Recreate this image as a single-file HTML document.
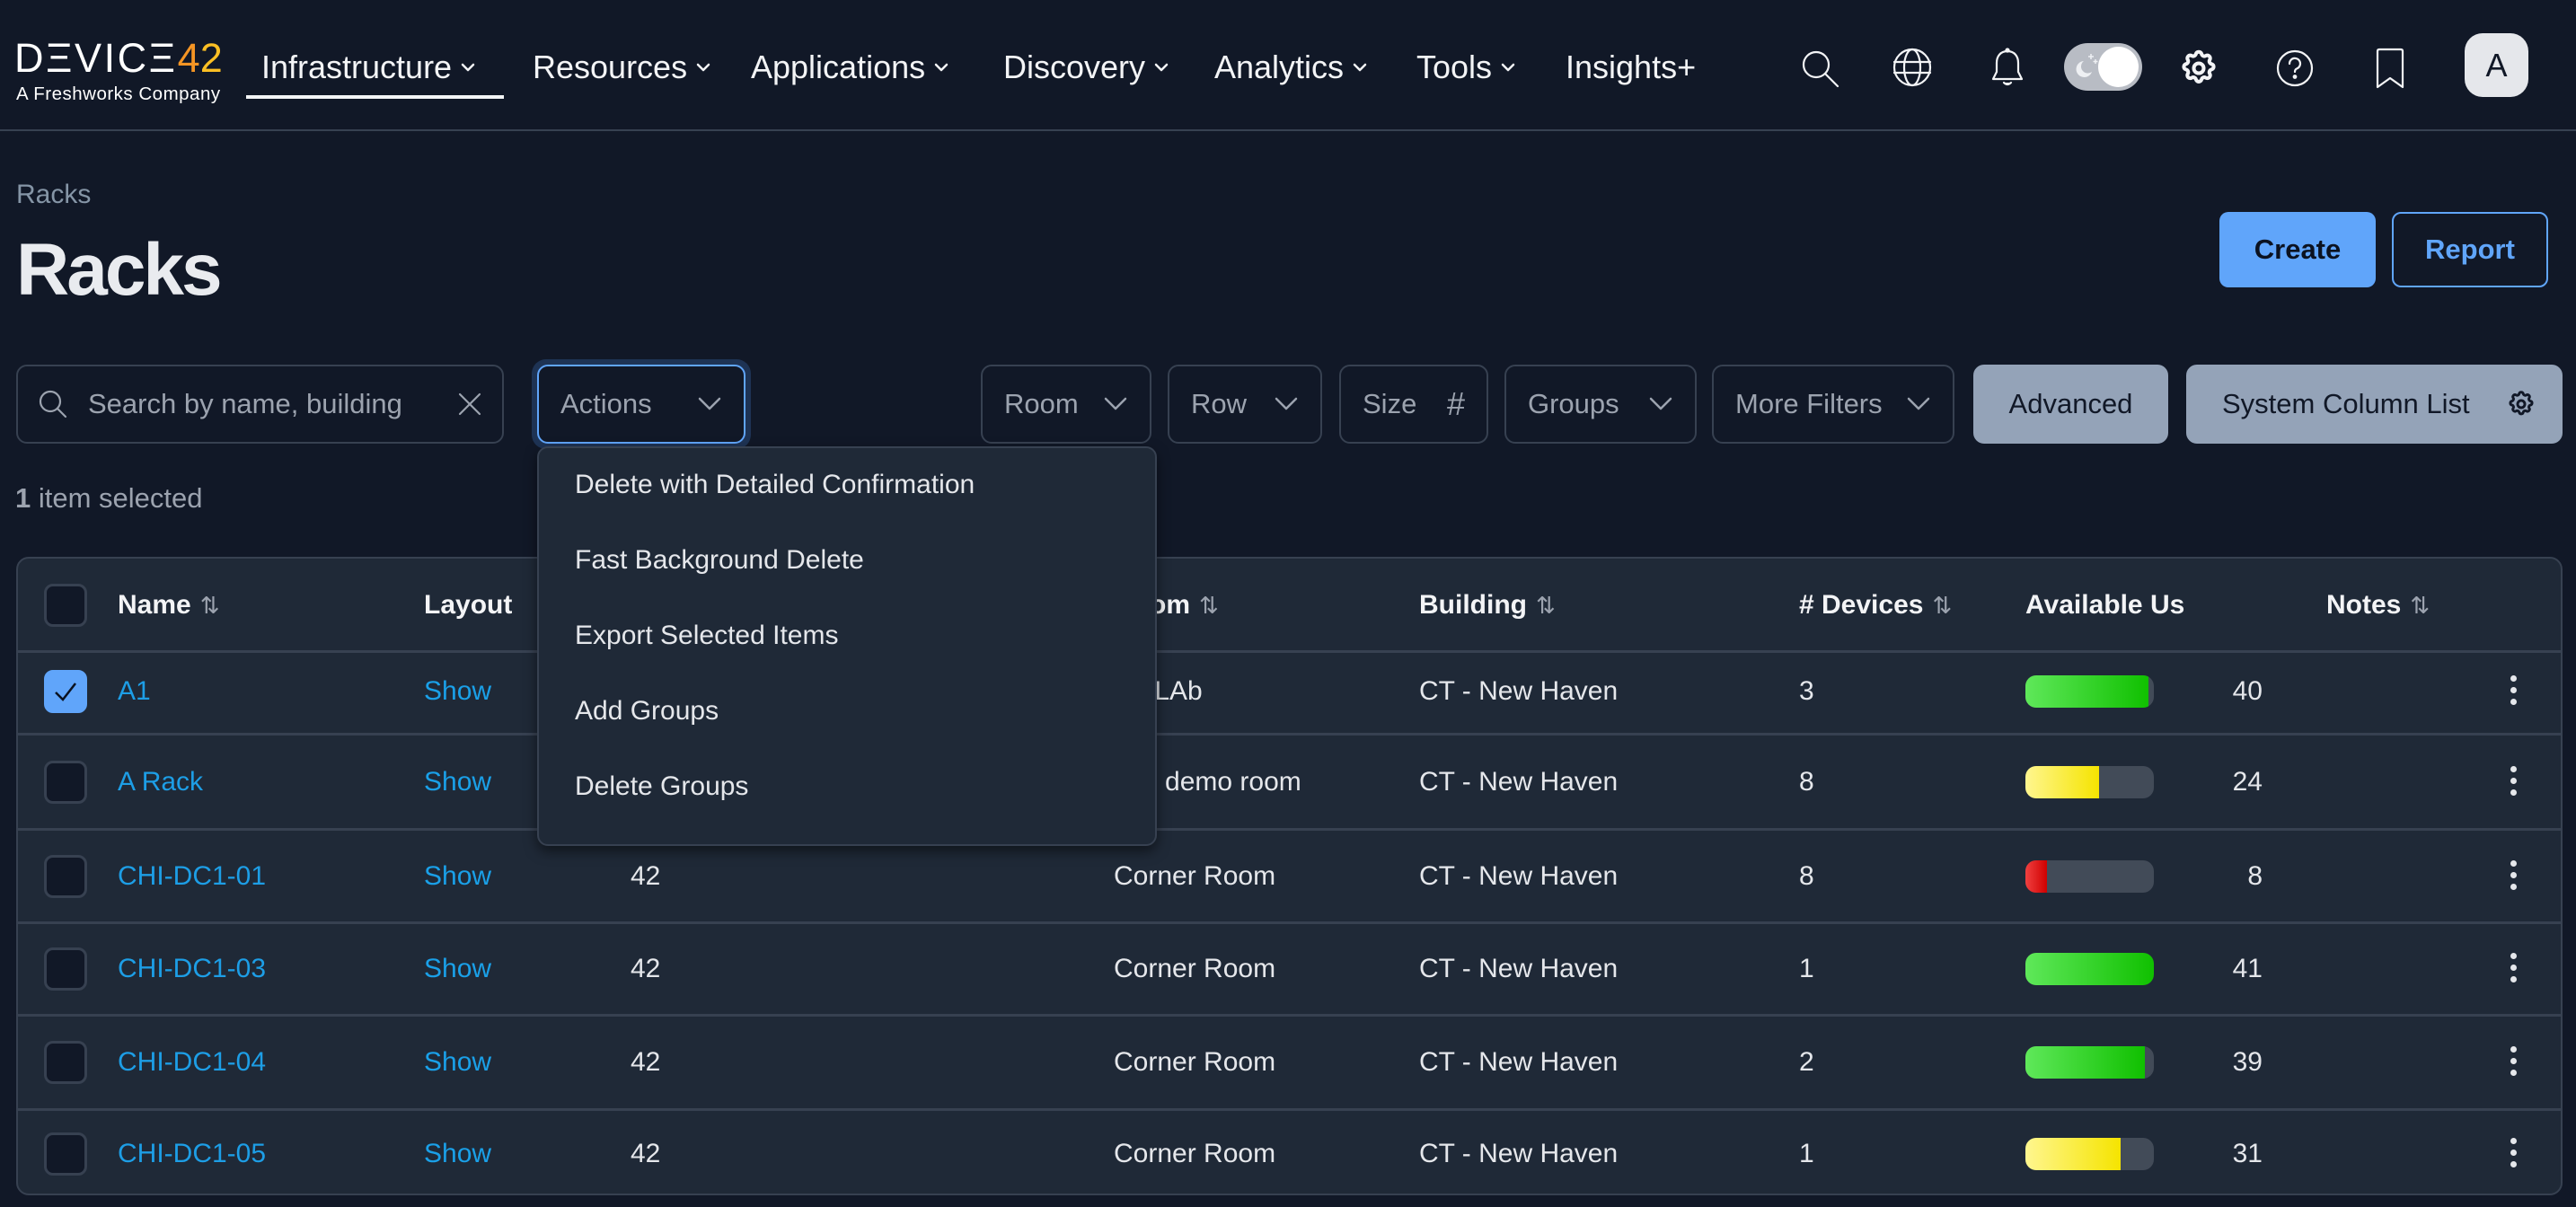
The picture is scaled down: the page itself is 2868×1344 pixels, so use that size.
<!DOCTYPE html>
<html><head><meta charset="utf-8">
<style>
*{box-sizing:border-box;margin:0;padding:0}
body{width:2868px;height:1344px;background:#111827;font-family:"Liberation Sans",sans-serif;color:#e5e7eb;position:relative;overflow:hidden}
.a{position:absolute}
.nav{font-size:36px;color:#f3f4f6;top:54px;display:flex;align-items:center;gap:10px;white-space:nowrap}
.ic{position:absolute;fill:none;stroke:#f3f4f6;stroke-width:2.2;stroke-linecap:round;stroke-linejoin:round}
.f{position:absolute;top:406px;height:88px;border:2px solid #374151;border-radius:12px;display:flex;align-items:center;padding:0 24px;font-size:31px;color:#9ca3af;justify-content:space-between}
.chev{width:28px;height:18px;fill:none;stroke:#9ca3af;stroke-width:2.5;stroke-linecap:round;stroke-linejoin:round}
.row{position:absolute;left:20px;width:2831px;border-top:3px solid #374151}
.c{position:absolute;top:0;height:100%;display:flex;align-items:center;font-size:30px;color:#e5e7eb;white-space:nowrap}
.lk{color:#1d9ee6}
.sh{color:#1aa0e8}
.cb{position:absolute;left:29px;top:50%;margin-top:-24px;width:48px;height:48px;border:3px solid #374151;border-radius:10px;background:#111827}
.hd{font-weight:bold;font-size:30px;color:#f3f4f6}
.srt{font-weight:normal;color:#9ca3af;margin-left:10px;font-size:26px}
.bar{position:absolute;left:2235px;top:50%;margin-top:-18px;width:143px;height:36px;border-radius:12px;background:#424b58;overflow:hidden}
.bar i{display:block;height:100%}
.g{background:linear-gradient(90deg,#5fe85a,#10c000)}
.y{background:linear-gradient(90deg,#fff68f,#f5e400)}
.r{background:linear-gradient(90deg,#f04040,#d00000)}
.keb{position:absolute;left:2775px;top:50%;margin-top:-18px;width:8px}
.keb b{display:block;width:7px;height:7px;border-radius:50%;background:#e5e7eb;margin-bottom:6px}
.mi{position:absolute;left:40px;font-size:30px;color:#e5e7eb}
</style></head><body>

<div class="a" style="left:16px;top:40px;font-size:45px;letter-spacing:2.6px;color:#fff;line-height:50px">D<span>Ξ</span>VIC<span>Ξ</span><span style="color:#f59524;letter-spacing:0">4</span><span style="color:#fbbf24">2</span></div>
<div class="a" style="left:18px;top:93px;font-size:20.5px;color:#fff;letter-spacing:0.5px">A Freshworks Company</div>

<div class="nav a" style="left:291px">Infrastructure <svg class="chev" style="width:16px;height:10px;stroke:#f3f4f6" viewBox="0 0 16 10"><polyline points="2,2 8,8 14,2"/></svg></div>
<div class="a" style="left:274px;top:106px;width:287px;height:4px;background:#f3f4f6"></div>
<div class="nav a" style="left:593px">Resources <svg class="chev" style="width:16px;height:10px;stroke:#f3f4f6" viewBox="0 0 16 10"><polyline points="2,2 8,8 14,2"/></svg></div>
<div class="nav a" style="left:836px">Applications <svg class="chev" style="width:16px;height:10px;stroke:#f3f4f6" viewBox="0 0 16 10"><polyline points="2,2 8,8 14,2"/></svg></div>
<div class="nav a" style="left:1117px">Discovery <svg class="chev" style="width:16px;height:10px;stroke:#f3f4f6" viewBox="0 0 16 10"><polyline points="2,2 8,8 14,2"/></svg></div>
<div class="nav a" style="left:1352px">Analytics <svg class="chev" style="width:16px;height:10px;stroke:#f3f4f6" viewBox="0 0 16 10"><polyline points="2,2 8,8 14,2"/></svg></div>
<div class="nav a" style="left:1577px">Tools <svg class="chev" style="width:16px;height:10px;stroke:#f3f4f6" viewBox="0 0 16 10"><polyline points="2,2 8,8 14,2"/></svg></div>
<div class="nav a" style="left:1743px">Insights+</div>

<svg class="ic" style="left:2004px;top:54px" width="46" height="46" viewBox="0 0 46 46"><circle cx="18" cy="18" r="14"/><line x1="28" y1="28" x2="42" y2="42"/></svg>
<svg class="ic" style="left:2106px;top:52px" width="46" height="46" viewBox="0 0 46 46"><circle cx="23" cy="23" r="20"/><ellipse cx="23" cy="23" rx="9" ry="20"/><line x1="3" y1="17" x2="43" y2="17"/><line x1="3" y1="29" x2="43" y2="29"/></svg>
<svg class="ic" style="left:2214px;top:52px" width="42" height="48" viewBox="0 0 42 48"><path d="M21 5c-8 0-12 6-12 13v10l-4 8h32l-4-8V18c0-7-4-13-12-13z"/><path d="M17 40q4 4 8 0" fill="#f3f4f6"/><circle cx="21" cy="4" r="1.5" fill="#f3f4f6"/></svg>
<div class="a" style="left:2298px;top:48px;width:87px;height:53px;border-radius:27px;background:#b8bcc4"></div>
<div class="a" style="left:2336px;top:52px;width:45px;height:45px;border-radius:50%;background:#fff"></div>
<svg class="a" style="left:2306px;top:58px" width="30" height="30" viewBox="0 0 30 30"><path d="M14 10a9 9 0 1 0 9 12a7 7 0 0 1-9-12z" fill="#eef0f3"/><path d="M22 2v6M19 5h6M27 8v5M24.5 10.5h5" stroke="#eef0f3" stroke-width="1.5"/></svg>
<svg class="ic" style="left:2426px;top:54px" width="44" height="44" viewBox="0 0 24 24" stroke-width="1.1"><path d="M10.3 3.3c.4-1.7 2.9-1.7 3.4 0a1.7 1.7 0 0 0 2.6 1.1c1.5-.9 3.3.8 2.4 2.4a1.7 1.7 0 0 0 1 2.6c1.8.4 1.8 2.9 0 3.4a1.7 1.7 0 0 0-1 2.6c.9 1.5-.8 3.3-2.4 2.4a1.7 1.7 0 0 0-2.6 1c-.4 1.8-2.9 1.8-3.4 0a1.7 1.7 0 0 0-2.6-1c-1.5.9-3.3-.8-2.4-2.4a1.7 1.7 0 0 0-1-2.6c-1.8-.4-1.8-2.9 0-3.4a1.7 1.7 0 0 0 1-2.6c-.9-1.5.8-3.3 2.4-2.4 1 .6 2.3.1 2.6-1.1z"/><circle cx="12" cy="12" r="3"/></svg>
<svg class="ic" style="left:2533px;top:54px" width="44" height="44" viewBox="0 0 44 44"><circle cx="22" cy="22" r="19"/><path d="M16 17a6 6 0 1 1 8 5.5c-1.5.7-2 1.7-2 3.5"/><circle cx="22" cy="31.5" r="1.3" fill="#f3f4f6"/></svg>
<svg class="ic" style="left:2644px;top:53px" width="34" height="46" viewBox="0 0 34 46"><path d="M3 4q0-2 2-2h24q2 0 2 2v40l-14-10-14 10z"/></svg>
<div class="a" style="left:2744px;top:37px;width:71px;height:71px;border-radius:20px;background:#e5e7eb;color:#111827;font-size:36px;display:flex;align-items:center;justify-content:center">A</div>
<div class="a" style="left:0;top:144px;width:2868px;height:2px;background:#374151"></div>

<div class="a" style="left:18px;top:200px;font-size:30px;color:#8595a6">Racks</div>
<div class="a" style="left:18px;top:254px;font-size:82px;font-weight:bold;color:#e9ebef;letter-spacing:-3px">Racks</div>
<div class="a" style="left:2471px;top:236px;width:174px;height:84px;border-radius:10px;background:#60a5fa;color:#0b1220;font-size:31px;font-weight:bold;display:flex;align-items:center;justify-content:center">Create</div>
<div class="a" style="left:2663px;top:236px;width:174px;height:84px;border-radius:10px;border:2px solid #60a5fa;color:#60a5fa;font-size:31px;font-weight:bold;display:flex;align-items:center;justify-content:center">Report</div>

<div class="f" style="left:18px;width:543px;padding:0 22px">
 <svg class="ic" style="position:static;stroke:#9ca3af" width="34" height="34" viewBox="0 0 34 34"><circle cx="14" cy="14" r="11"/><line x1="22" y1="22" x2="31" y2="31"/></svg>
 <span style="flex:1;margin-left:22px">Search by name, building</span>
 <svg class="ic" style="position:static;stroke:#9ca3af" width="28" height="28" viewBox="0 0 28 28"><line x1="3" y1="3" x2="25" y2="25"/><line x1="25" y1="3" x2="3" y2="25"/></svg>
</div>
<div class="a" style="left:592px;top:400px;width:244px;height:100px;border-radius:16px;background:#1e3354"></div>
<div class="f" style="left:598px;width:232px;border-color:#60a5fa;background:#111827">Actions <svg class="chev" viewBox="0 0 28 18"><polyline points="3,3 14,14 25,3"/></svg></div>
<div class="f" style="left:1092px;width:190px">Room <svg class="chev" viewBox="0 0 28 18"><polyline points="3,3 14,14 25,3"/></svg></div>
<div class="f" style="left:1300px;width:172px">Row <svg class="chev" viewBox="0 0 28 18"><polyline points="3,3 14,14 25,3"/></svg></div>
<div class="f" style="left:1491px;width:166px">Size <span style="font-size:36px">#</span></div>
<div class="f" style="left:1675px;width:214px">Groups <svg class="chev" viewBox="0 0 28 18"><polyline points="3,3 14,14 25,3"/></svg></div>
<div class="f" style="left:1906px;width:270px">More Filters <svg class="chev" viewBox="0 0 28 18"><polyline points="3,3 14,14 25,3"/></svg></div>
<div class="f" style="left:2197px;width:217px;background:#94a3b8;border-color:#94a3b8;color:#111827;justify-content:center">Advanced</div>
<div class="f" style="left:2434px;width:419px;background:#94a3b8;border-color:#94a3b8;color:#111827;padding:0 28px 0 38px">System Column List <svg class="ic" style="position:static;stroke:#111827" width="32" height="32" viewBox="0 0 24 24" stroke-width="1.5"><path d="M10.3 3.3c.4-1.7 2.9-1.7 3.4 0a1.7 1.7 0 0 0 2.6 1.1c1.5-.9 3.3.8 2.4 2.4a1.7 1.7 0 0 0 1 2.6c1.8.4 1.8 2.9 0 3.4a1.7 1.7 0 0 0-1 2.6c.9 1.5-.8 3.300-2.4 2.4a1.7 1.7 0 0 0-2.6 1c-.4 1.8-2.9 1.8-3.4 0a1.7 1.7 0 0 0-2.6-1c-1.5.9-3.3-.8-2.4-2.4a1.7 1.7 0 0 0-1-2.6c-1.8-.4-1.8-2.9 0-3.4a1.7 1.7 0 0 0 1-2.6c-.9-1.5.8-3.3 2.4-2.4 1 .6 2.3.1 2.6-1.1z"/><circle cx="12" cy="12" r="3"/></svg></div>

<div class="a" style="left:17px;top:537px;font-size:31px;color:#9ca3af"><b>1</b> item selected</div>

<div class="a" style="left:18px;top:620px;width:2835px;height:711px;border:2px solid #374151;border-radius:14px;background:#1f2937"></div>

<div class="row" style="top:622px;height:104px;border-top:none">
 <div class="cb"></div>
 <div class="c hd" style="left:111px">Name<span class="srt">⇅</span></div>
 <div class="c hd" style="left:452px">Layout</div>
 <div class="c hd" style="left:1220px">Room<span class="srt">⇅</span></div>
 <div class="c hd" style="left:1560px">Building<span class="srt">⇅</span></div>
 <div class="c hd" style="left:1983px"># Devices<span class="srt">⇅</span></div>
 <div class="c hd" style="left:2235px">Available Us</div>
 <div class="c hd" style="left:2570px">Notes<span class="srt">⇅</span></div>
</div>

<div class="row" style="top:724px;height:88px">
 <div class="cb" style="background:#60a5fa;border-color:#60a5fa"><svg width="42" height="42" viewBox="0 0 42 42" style="position:absolute;left:0;top:0"><polyline points="10,22 18,30 32,12" fill="none" stroke="#0b1220" stroke-width="2.5"/></svg></div>
 <div class="c lk" style="left:111px">A1</div><div class="c sh" style="left:452px">Show</div>
 <div class="c" style="left:1202px">Test LAb</div><div class="c" style="left:1560px">CT - New Haven</div><div class="c" style="left:1983px">3</div>
 <div class="bar"><i class="g" style="width:96%"></i></div><div class="c" style="left:0;width:2499px;justify-content:flex-end">40</div>
 <div class="keb"><b></b><b></b><b></b></div>
</div>
<div class="row" style="top:816px;height:106px">
 <div class="cb"></div><div class="c lk" style="left:111px">A Rack</div><div class="c sh" style="left:452px">Show</div>
 <div class="c" style="left:1207px">NYS demo room</div><div class="c" style="left:1560px">CT - New Haven</div><div class="c" style="left:1983px">8</div>
 <div class="bar"><i class="y" style="width:57%"></i></div><div class="c" style="left:0;width:2499px;justify-content:flex-end">24</div>
 <div class="keb"><b></b><b></b><b></b></div>
</div>
<div class="row" style="top:922px;height:104px">
 <div class="cb"></div><div class="c lk" style="left:111px">CHI-DC1-01</div><div class="c sh" style="left:452px">Show</div><div class="c" style="left:682px">42</div>
 <div class="c" style="left:1220px">Corner Room</div><div class="c" style="left:1560px">CT - New Haven</div><div class="c" style="left:1983px">8</div>
 <div class="bar"><i class="r" style="width:17%"></i></div><div class="c" style="left:0;width:2499px;justify-content:flex-end">8</div>
 <div class="keb"><b></b><b></b><b></b></div>
</div>
<div class="row" style="top:1026px;height:103px">
 <div class="cb"></div><div class="c lk" style="left:111px">CHI-DC1-03</div><div class="c sh" style="left:452px">Show</div><div class="c" style="left:682px">42</div>
 <div class="c" style="left:1220px">Corner Room</div><div class="c" style="left:1560px">CT - New Haven</div><div class="c" style="left:1983px">1</div>
 <div class="bar"><i class="g" style="width:100%"></i></div><div class="c" style="left:0;width:2499px;justify-content:flex-end">41</div>
 <div class="keb"><b></b><b></b><b></b></div>
</div>
<div class="row" style="top:1129px;height:105px">
 <div class="cb"></div><div class="c lk" style="left:111px">CHI-DC1-04</div><div class="c sh" style="left:452px">Show</div><div class="c" style="left:682px">42</div>
 <div class="c" style="left:1220px">Corner Room</div><div class="c" style="left:1560px">CT - New Haven</div><div class="c" style="left:1983px">2</div>
 <div class="bar"><i class="g" style="width:93%"></i></div><div class="c" style="left:0;width:2499px;justify-content:flex-end">39</div>
 <div class="keb"><b></b><b></b><b></b></div>
</div>
<div class="row" style="top:1234px;height:99px">
 <div class="cb"></div><div class="c lk" style="left:111px">CHI-DC1-05</div><div class="c sh" style="left:452px">Show</div><div class="c" style="left:682px">42</div>
 <div class="c" style="left:1220px">Corner Room</div><div class="c" style="left:1560px">CT - New Haven</div><div class="c" style="left:1983px">1</div>
 <div class="bar"><i class="y" style="width:74%"></i></div><div class="c" style="left:0;width:2499px;justify-content:flex-end">31</div>
 <div class="keb"><b></b><b></b><b></b></div>
</div>

<div class="a" style="left:598px;top:497px;width:690px;height:445px;background:#1f2937;border:2px solid #374151;border-radius:12px;box-shadow:0 6px 14px rgba(0,0,0,0.5)">
 <div class="mi" style="top:24px">Delete with Detailed Confirmation</div>
 <div class="mi" style="top:108px">Fast Background Delete</div>
 <div class="mi" style="top:192px">Export Selected Items</div>
 <div class="mi" style="top:276px">Add Groups</div>
 <div class="mi" style="top:360px">Delete Groups</div>
</div>
</body></html>
